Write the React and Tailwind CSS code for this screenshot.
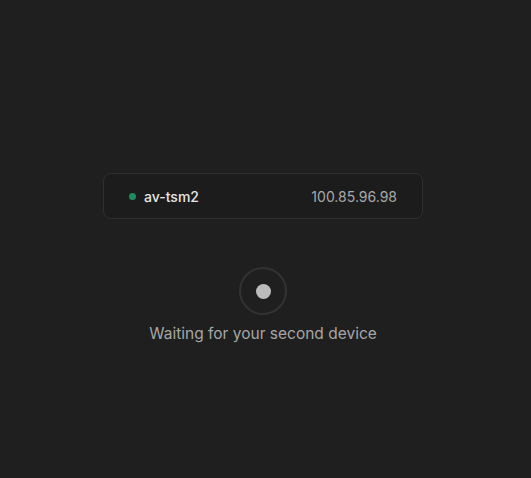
import React from "react";

export default function App() {
  return (
    <div
      className="min-h-screen w-full bg-[#1f1f1f] flex flex-col items-center pt-[173px] pr-[5px]"
      style={{ fontFamily: "Inter, 'Noto Sans', sans-serif" }}
    >
      <div className="w-[320px] h-[46px] rounded-lg border border-[#2f2f2f] bg-[#1c1c1c] flex items-center justify-between pl-[25px] pr-[25px]">
        <div className="flex items-center gap-[8px]">
          <span className="w-[7px] h-[7px] rounded-full bg-[#1d8c60]" />
          <span className="text-[14px] font-medium text-[#e6e6e6]">av-tsm2</span>
        </div>
        <span className="text-[14px] text-[#a8a8a8]">100.85.96.98</span>
      </div>

      <div className="mt-[48px] w-[48px] h-[48px] rounded-full border-2 border-[#333333] flex items-center justify-center">
        <span className="w-[15px] h-[15px] rounded-full bg-[#bdbcbc]" />
      </div>

      <p className="mt-[7px] text-[15.5px] leading-6 text-[#a6a6a6]">Waiting for your second device</p>
    </div>
  );
}
